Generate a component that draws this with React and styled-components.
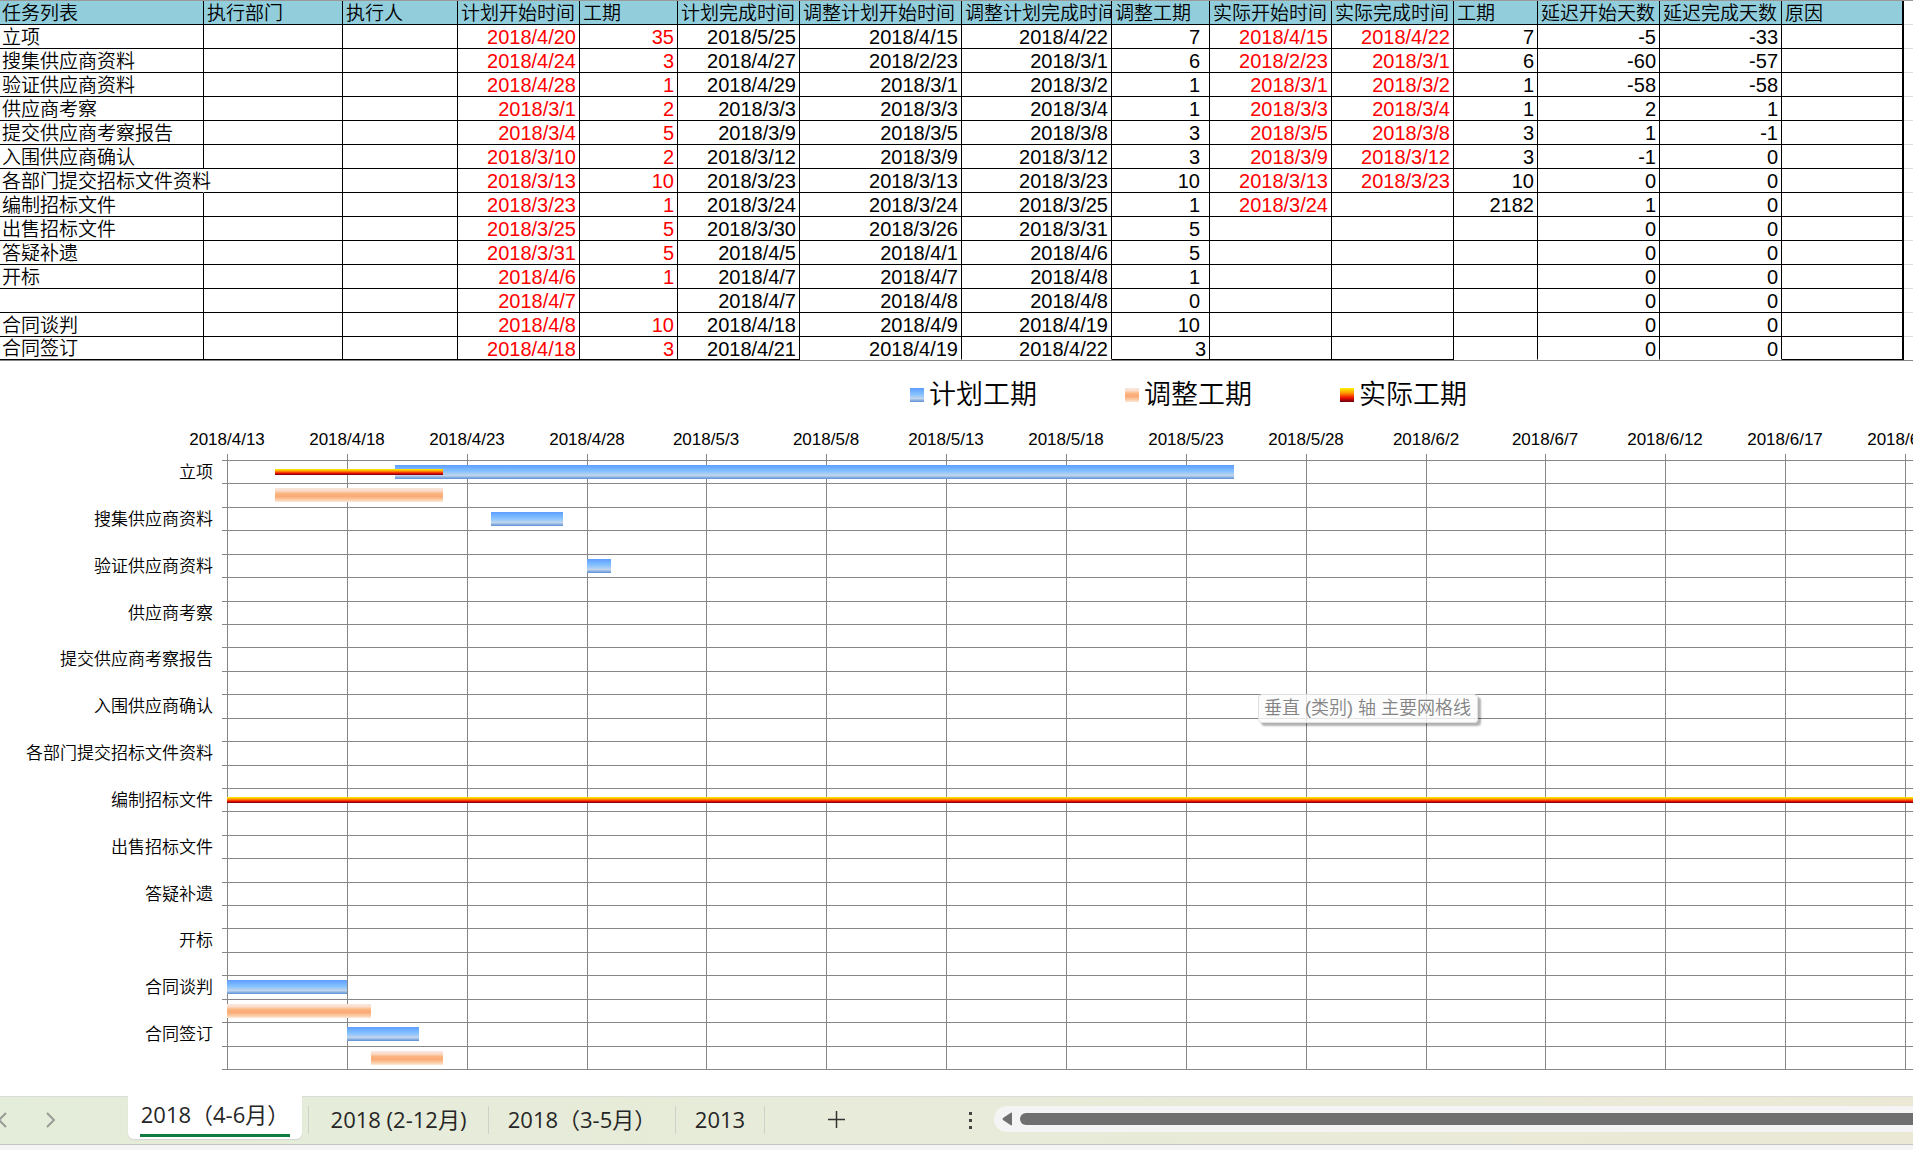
import React from "react";
import styled, { createGlobalStyle } from "styled-components";

const Global = createGlobalStyle`
  * { box-sizing: border-box; }
  html, body { margin: 0; background: #fff; }
  body {
    overflow: hidden;
    font-family: "Liberation Sans", "Noto Sans CJK SC", sans-serif;
    font-weight: 350;
    color: #000;
  }
`;

const Page = styled.main`
  display: flex;
  flex-direction: column;
  height: 100vh;
  overflow: hidden;
`;

const SheetArea = styled.section`
  display: flex;
  border-top: 1px solid #999;
  overflow: hidden;
`;

const SheetTable = styled.table`
  flex: none;
  width: 1904px;
  table-layout: fixed;
  border-collapse: separate;
  border-spacing: 0;
`;

const HeadCell = styled.th`
  height: 24px;
  padding: 2px 0 0 ${(p) => (p.$first ? 2 : 3)}px;
  overflow: hidden;
  white-space: nowrap;
  text-align: left;
  font-size: 19px;
  font-weight: 350;
  line-height: 21px;
  background: #92cddc;
  border-right: ${(p) => (p.$last ? 2 : 1)}px solid #000;
  border-bottom: 1px solid #000;
`;

const Cell = styled.td`
  height: ${(p) => (p.$lastRow ? 23 : 24)}px;
  padding: 2px ${(p) => (p.$indent ? 9 : 3)}px 0 2px;
  white-space: nowrap;
  overflow: visible;
  text-align: ${(p) => (p.$name ? "left" : "right")};
  font-size: ${(p) => (p.$name ? 19 : 20)}px;
  line-height: ${(p) => (p.$lastRow ? 20 : 21)}px;
  color: ${(p) => (p.$red ? "#f00" : "#000")};
  border-right: ${(p) => (p.$last ? 2 : 1)}px solid ${(p) => (p.$spill ? "transparent" : "#000")};
  border-bottom: 1px solid ${(p) => (p.$open ? "transparent" : "#000")};
`;

const EmptyColumn = styled.div`
  flex: 1;
  background: repeating-linear-gradient(#fff 0 23px, #dcdcdc 23px 24px);
`;

const ChartArea = styled.section`
  flex: 1;
  min-height: 0;
  display: flex;
  flex-direction: column;
  border-top: 1px solid #868686;
  background: #fff;
  overflow: hidden;
`;

const Legend = styled.ul`
  display: flex;
  gap: 88px;
  margin: 0;
  padding: 14px 0 0 910px;
  list-style: none;
`;

const LegendItem = styled.li`
  display: flex;
  align-items: center;
  gap: 5px;
  font-size: 27px;
  line-height: 40px;
`;

const gradients = {
  plan: "linear-gradient(#5e9eff, #85c2ff 45%, #c0d4ec 75%, #5a8fd8)",
  adjusted: "linear-gradient(#fbe6dc, #fbdccb 20%, #fbb47c 40%, #fbaa78 60%, #fbc597 78%, #fbe9db)",
  actual: "linear-gradient(#fff200, #ff9a00 35%, #f01000 70%, #6a0010)",
};

const Swatch = styled.span`
  width: 14px;
  height: 14px;
  background: ${(p) => gradients[p.$kind]};
`;

const ChartBody = styled.div`
  display: grid;
  grid-template-columns: 213px minmax(0, 1fr);
  margin-top: 9px;
`;

const CategoryList = styled.ol`
  display: grid;
  grid-template-rows: repeat(13, 1fr);
  height: 609px;
  margin: 37px 0 0;
  padding: 0;
  list-style: none;
`;

const Category = styled.li`
  font-size: 17px;
  line-height: 24px;
  text-align: right;
  white-space: nowrap;
`;

const PlotWrap = styled.div`
  position: relative;
  height: 652px;
`;

const Plot = styled.svg`
  display: block;
  width: 100%;
  height: 100%;
  overflow: visible;
  font-size: 17px;
`;

const Tooltip = styled.div`
  position: absolute;
  left: 1045px;
  top: 270px;
  padding: 0 6px 0 5px;
  border: 1px solid #e0e0e0;
  border-radius: 4px;
  font-size: 18px;
  line-height: 27px;
  white-space: nowrap;
  color: #848484;
  background: rgba(251, 251, 251, 0.8);
  box-shadow: 3px 3px 2px rgba(0, 0, 0, 0.3);
`;

const TabBar = styled.footer`
  flex: none;
  display: flex;
  align-items: flex-start;
  height: 49px;
  border-top: 1px solid #dcdcdc;
  border-bottom: 1px solid #c4c4c4;
  background: linear-gradient(90deg, #e4edd9, #e8ebd9 50%, #ebe9d6);
`;

const StatusStrip = styled.div`
  flex: none;
  height: 5px;
  background: #f5f4f5;
`;

const NavGroup = styled.nav`
  display: flex;
  width: 128px;
  height: 42px;
  align-items: center;
  padding-top: 4px;
`;

const IconButton = styled.button`
  display: flex;
  justify-content: center;
  align-items: center;
  flex: none;
  width: ${(p) => p.$width}px;
  height: ${(p) => p.$height || 30}px;
  padding: 0;
  border: 0;
  background: none;
  color: ${(p) => p.$color || "#9a9c96"};
`;

const tabFont = `
  font-family: "Open Sans", "Noto Sans CJK SC", sans-serif;
  font-size: 22px;
  font-weight: 400;
  color: #262626;
`;

const ActiveTab = styled.button`
  ${tabFont}
  flex: none;
  width: 174px;
  height: 43px;
  margin-top: -1px;
  padding: 0 12px;
  border: 0;
  border-radius: 0 0 6px 6px;
  background: #fff;
  box-shadow: 0 1px 1px #d4d4d4;
`;

const ActiveLabel = styled.span`
  display: block;
  line-height: 31px;
  height: 38px;
  white-space: nowrap;
  border-bottom: 3px solid #107c41;
`;

const Tab = styled.button`
  ${tabFont}
  flex: none;
  width: ${(p) => p.$width}px;
  height: 28px;
  margin-top: 9px;
  padding: 0 0 2px;
  line-height: 24px;
  white-space: nowrap;
  border: 0;
  border-right: 1px solid #cfd2c8;
  background: none;
`;

const TabGap = styled.span`
  width: 7px;
  height: 28px;
  margin-top: 9px;
  border-right: 1px solid #cfd2c8;
`;

const ScrollTrack = styled.div`
  flex: 1;
  display: flex;
  align-items: center;
  height: 26px;
  margin-top: 9px;
  border-radius: 13px 0 0 13px;
  background: #f4f4f4;
`;

const ScrollThumb = styled.div`
  flex: 1;
  height: 12px;
  border-radius: 6px 0 0 6px;
  background: #6f6f6f;
`;

const columns = [
  ["任务列表", 204], ["执行部门", 139], ["执行人", 115], ["计划开始时间", 122], ["工期", 98],
  ["计划完成时间", 122], ["调整计划开始时间", 162], ["调整计划完成时间", 150], ["调整工期", 98],
  ["实际开始时间", 122], ["实际完成时间", 122], ["工期", 84], ["延迟开始天数", 122],
  ["延迟完成天数", 122], ["原因", 122],
];

const rows = [
  ["立项", "", "", "2018/4/20", "35", "2018/5/25", "2018/4/15", "2018/4/22", "7", "2018/4/15", "2018/4/22", "7", "-5", "-33", ""],
  ["搜集供应商资料", "", "", "2018/4/24", "3", "2018/4/27", "2018/2/23", "2018/3/1", "6", "2018/2/23", "2018/3/1", "6", "-60", "-57", ""],
  ["验证供应商资料", "", "", "2018/4/28", "1", "2018/4/29", "2018/3/1", "2018/3/2", "1", "2018/3/1", "2018/3/2", "1", "-58", "-58", ""],
  ["供应商考察", "", "", "2018/3/1", "2", "2018/3/3", "2018/3/3", "2018/3/4", "1", "2018/3/3", "2018/3/4", "1", "2", "1", ""],
  ["提交供应商考察报告", "", "", "2018/3/4", "5", "2018/3/9", "2018/3/5", "2018/3/8", "3", "2018/3/5", "2018/3/8", "3", "1", "-1", ""],
  ["入围供应商确认", "", "", "2018/3/10", "2", "2018/3/12", "2018/3/9", "2018/3/12", "3", "2018/3/9", "2018/3/12", "3", "-1", "0", ""],
  ["各部门提交招标文件资料", "", "", "2018/3/13", "10", "2018/3/23", "2018/3/13", "2018/3/23", "10", "2018/3/13", "2018/3/23", "10", "0", "0", ""],
  ["编制招标文件", "", "", "2018/3/23", "1", "2018/3/24", "2018/3/24", "2018/3/25", "1", "2018/3/24", "", "2182", "1", "0", ""],
  ["出售招标文件", "", "", "2018/3/25", "5", "2018/3/30", "2018/3/26", "2018/3/31", "5", "", "", "", "0", "0", ""],
  ["答疑补遗", "", "", "2018/3/31", "5", "2018/4/5", "2018/4/1", "2018/4/6", "5", "", "", "", "0", "0", ""],
  ["开标", "", "", "2018/4/6", "1", "2018/4/7", "2018/4/7", "2018/4/8", "1", "", "", "", "0", "0", ""],
  ["", "", "", "2018/4/7", "", "2018/4/7", "2018/4/8", "2018/4/8", "0", "", "", "", "0", "0", ""],
  ["合同谈判", "", "", "2018/4/8", "10", "2018/4/18", "2018/4/9", "2018/4/19", "10", "", "", "", "0", "0", ""],
  ["合同签订", "", "", "2018/4/18", "3", "2018/4/21", "2018/4/19", "2018/4/22", "3", "", "", "", "0", "0", ""],
];

const redColumns = [3, 4, 9, 10];
const openColumns = [6, 7, 11, 12, 13];

const dates = [
  "2018/4/13", "2018/4/18", "2018/4/23", "2018/4/28", "2018/5/3", "2018/5/8", "2018/5/13", "2018/5/18",
  "2018/5/23", "2018/5/28", "2018/6/2", "2018/6/7", "2018/6/12", "2018/6/17", "2018/6/22",
];

const legend = [["plan", "计划工期"], ["adjusted", "调整工期"], ["actual", "实际工期"]];

// lane: half-row index; start and end are days counted from 2018/4/13
const bars = [
  { kind: "plan", lane: 0, start: 7, end: 42 },
  { kind: "actual", lane: 0, start: 2, end: 9 },
  { kind: "adjusted", lane: 1, start: 2, end: 9 },
  { kind: "plan", lane: 2, start: 11, end: 14 },
  { kind: "plan", lane: 4, start: 15, end: 16 },
  { kind: "actual", lane: 14, start: 0, end: 90 },
  { kind: "plan", lane: 22, start: 0, end: 5 },
  { kind: "adjusted", lane: 23, start: 0, end: 6 },
  { kind: "plan", lane: 24, start: 5, end: 8 },
  { kind: "adjusted", lane: 25, start: 6, end: 9 },
];

const stops = {
  plan: [[0, "#5e9eff"], [0.45, "#85c2ff"], [0.75, "#c0d4ec"], [1, "#5a8fd8"]],
  adjusted: [[0, "#fbe6dc"], [0.2, "#fbdccb"], [0.4, "#fbb47c"], [0.6, "#fbaa78"], [0.78, "#fbc597"], [1, "#fbe9db"]],
  actual: [[0, "#fff200"], [0.35, "#ff9a00"], [0.7, "#f01000"], [1, "#6a0010"]],
};

const AXIS = 14;
const TOP = 36;
const HEIGHT = 609;
const LANES = 26;
const DAY = 1678 / 70;
const dayX = (d) => Math.round(AXIS + d * DAY);
const laneY = (i) => Math.round(TOP + (i * HEIGHT) / LANES);

function GanttPlot() {
  return (
    <Plot role="img" aria-label="甘特图" shapeRendering="crispEdges">
      <defs>
        {Object.entries(stops).map(([kind, list]) => (
          <linearGradient key={kind} id={kind} x1="0" y1="0" x2="0" y2="1">
            {list.map(([offset, color]) => <stop key={offset} offset={offset} stopColor={color} />)}
          </linearGradient>
        ))}
      </defs>
      {Array.from({ length: LANES + 1 }, (_, i) => (
        <rect key={i} x={AXIS - 5} y={laneY(i)} width="4000" height="1" fill="#868686" />
      ))}
      {dates.map((date, i) => (
        <g key={date}>
          <rect x={dayX(i * 5)} y={TOP - 6} width="1" height={HEIGHT + 6} fill="#868686" />
          <text x={dayX(i * 5)} y={TOP - 15} textAnchor="middle">{date}</text>
        </g>
      ))}
      {bars.map((b, i) => {
        const thin = b.kind === "actual";
        return (
          <rect
            key={i}
            x={dayX(b.start)}
            y={laneY(b.lane) + (thin ? 9 : 5)}
            width={dayX(b.end) - dayX(b.start)}
            height={thin ? 6 : 14}
            fill={`url(#${b.kind})`}
          />
        );
      })}
    </Plot>
  );
}

export default function App() {
  return (
    <Page>
      <Global />
      <SheetArea>
        <SheetTable>
          <colgroup>{columns.map(([, w], i) => <col key={i} width={w} />)}</colgroup>
          <thead>
            <tr>
              {columns.map(([name], i) => (
                <HeadCell key={i} scope="col" $first={i === 0} $last={i === 14}>{name}</HeadCell>
              ))}
            </tr>
          </thead>
          <tbody>
            {rows.map((row, r) => (
              <tr key={r}>
                {row.map((value, c) => (
                  <Cell
                    key={c}
                    $name={c === 0}
                    $red={redColumns.includes(c)}
                    $indent={c === 8 && r < 13}
                    $last={c === 14}
                    $lastRow={r === 13}
                    $open={r === 13 && openColumns.includes(c)}
                    $spill={c === 0 && r === 6}
                  >
                    {value}
                  </Cell>
                ))}
              </tr>
            ))}
          </tbody>
        </SheetTable>
        <EmptyColumn />
      </SheetArea>
      <ChartArea>
        <Legend>
          {legend.map(([kind, label]) => (
            <LegendItem key={kind}><Swatch $kind={kind} />{label}</LegendItem>
          ))}
        </Legend>
        <ChartBody>
          <CategoryList>
            {rows.filter((r) => r[0]).map((r) => <Category key={r[0]}>{r[0]}</Category>)}
          </CategoryList>
          <PlotWrap>
            <GanttPlot />
            <Tooltip role="tooltip">垂直 (类别) 轴 主要网格线</Tooltip>
          </PlotWrap>
        </ChartBody>
      </ChartArea>
      <TabBar>
        <NavGroup aria-label="工作表导航">
          <IconButton $width={8} aria-label="上一个">
            <svg width="8" height="18" viewBox="0 0 8 18" fill="none" stroke="currentColor" strokeWidth="2"><path d="M6 2L-1 9L6 16" /></svg>
          </IconButton>
          <IconButton $width={86} aria-label="下一个">
            <svg width="10" height="18" viewBox="0 0 10 18" fill="none" stroke="currentColor" strokeWidth="2"><path d="M1 2L8 9L1 16" /></svg>
          </IconButton>
        </NavGroup>
        <ActiveTab><ActiveLabel>2018（4-6月）</ActiveLabel></ActiveTab>
        <TabGap />
        <Tab $width={180}>2018 (2-12月)</Tab>
        <Tab $width={187}>2018（3-5月）</Tab>
        <Tab $width={89}>2013</Tab>
        <IconButton $width={143} $height={44} $color="#333" aria-label="新工作表">
          <svg width="17" height="17" viewBox="0 0 17 17" fill="none" stroke="currentColor" strokeWidth="1.5"><path d="M8.5 0V17M0 8.5H17" /></svg>
        </IconButton>
        <IconButton $width={86} $height={46} $color="#444" aria-label="更多">
          <svg width="86" height="18" viewBox="0 0 86 18" fill="currentColor"><path d="M61 1h3v3h-3zM61 8h3v3h-3zM61 15h3v3h-3z" /></svg>
        </IconButton>
        <ScrollTrack>
          <IconButton $width={26} $height={26} $color="#6f6f6f" aria-label="向左滚动">
            <svg width="10" height="14" viewBox="0 0 10 14" fill="currentColor"><path d="M10 1.5V12.5Q10 14 8.5 13L1 8Q0 7 1 6L8.5 1Q10 0 10 1.5Z" /></svg>
          </IconButton>
          <ScrollThumb />
        </ScrollTrack>
      </TabBar>
      <StatusStrip />
    </Page>
  );
}
